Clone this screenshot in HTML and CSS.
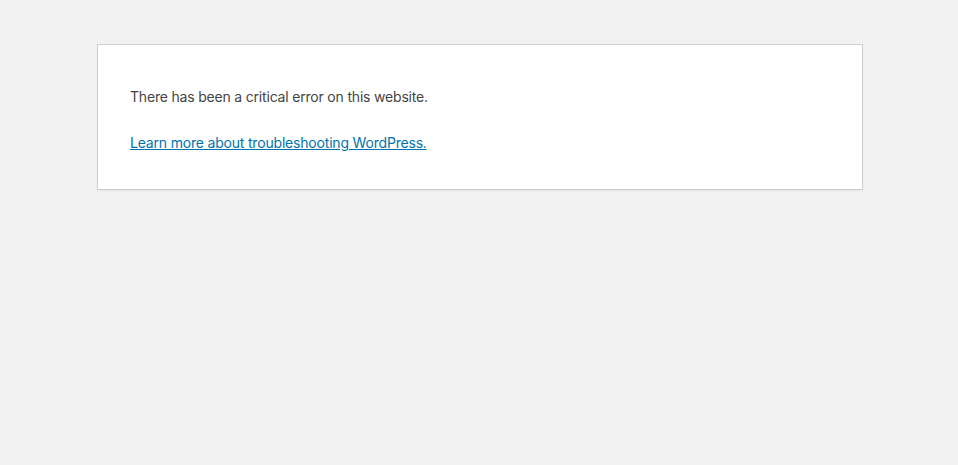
FILE: index.html
```html
<!DOCTYPE html>
<html lang="en-US">
<head>
  <meta charset="UTF-8" />
  <meta name="viewport" content="width=device-width, initial-scale=1" />
  <title>WordPress &rsaquo; Error</title>
  <link rel="stylesheet" href="styles.css">
</head>
<body class="page">
  <div class="error-page" id="error-page">
    <div class="wp-die-message">There has been a critical error on this website.</div>
    <p><a class="help-link" href="https://wordpress.org/documentation/article/faq-troubleshooting/">Learn more about troubleshooting WordPress.</a></p>
  </div>
</body>
</html>
```

FILE: styles.css
```css
html {
  background: #f1f1f1;
}
.page {
  margin: 0;
  padding: 44px 0 32px 2px;
}
.error-page {
  background: #fff;
  border: 1px solid #ccd0d4;
  color: #444;
  font-family: Inter, Roboto, "Noto Sans", sans-serif;
  margin: 0 auto;
  padding: 1px 32px 16px;
  max-width: 700px;
  box-shadow: 0 1px 1px rgba(0, 0, 0, 0.04);
}
.error-page p,
.error-page .wp-die-message {
  font-size: 14px;
  line-height: 1.5;
  letter-spacing: -0.19px;
  margin: 25px 0 20px;
}
.error-page .wp-die-message {
  margin-top: 40px;
}
.help-link {
  color: #0073aa;
}
```
